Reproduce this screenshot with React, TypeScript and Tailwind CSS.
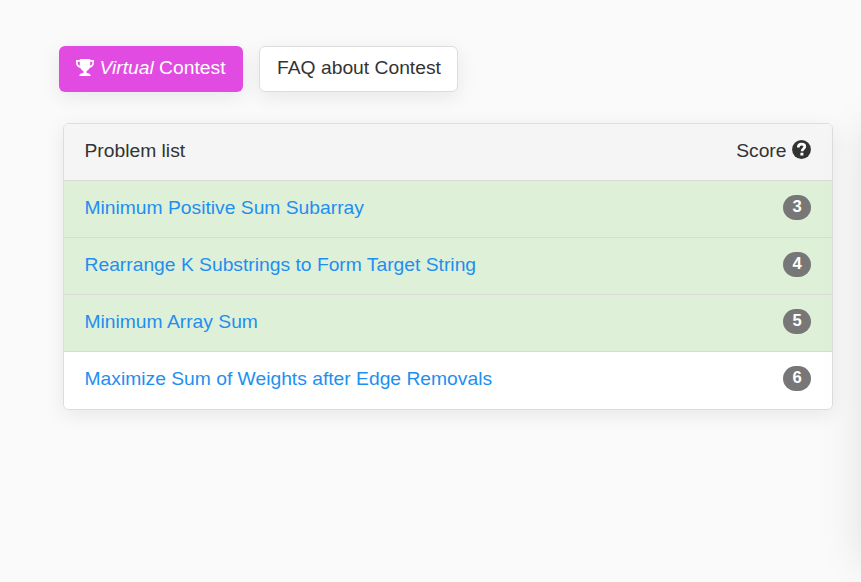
const PROBLEMS = [
  { title: 'Minimum Positive Sum Subarray', score: 3, solved: true },
  { title: 'Rearrange K Substrings to Form Target String', score: 4, solved: true },
  { title: 'Minimum Array Sum', score: 5, solved: true },
  { title: 'Maximize Sum of Weights after Edge Removals', score: 6, solved: false },
]

function TrophyIcon() {
  return (
    <svg viewBox="0 0 18 17" className="h-[17px] w-[18px] shrink-0" fill="currentColor">
      <path d="M3.800 0h10.400v1.100H18v2.400c0 2.600-1.400 5-4.400 5.500-.7 1.500-1.600 2.400-3 2.900v2.200c2 .1 3 .5 3.200 1.300h.7V17H3.500v-1.600h.7c.2-.8 1.200-1.200 3.200-1.300v-2.200c-1.400-.5-2.300-1.400-3-2.900C1.400 8.500 0 6.100 0 3.500V1.100h3.800zM1.700 2.700v.8c0 1.500.7 2.700 2.100 3.300V2.700zM14.200 2.700v4.100c1.400-.6 2.100-1.800 2.100-3.300v-.8z" fillRule="evenodd" />
    </svg>
  )
}

function QuestionIcon() {
  return (
    <svg viewBox="0 0 19 19" className="mb-[2px] h-[19px] w-[19px] shrink-0">
      <circle cx="9.5" cy="9.5" r="9.4" fill="#333" />
      <path d="M6.300 7.400c0-2.300 1.200-3.200 3.300-3.200 2 0 3.200.8 3.200 2.400 0 2.300-2.700 2.200-2.700 4.700" fill="none" stroke="#fff" strokeWidth="2.7" />
      <path d="M8.400 12.700h3v2.900h-3z" fill="#fff" />
    </svg>
  )
}

export default function App() {
  return (
    <div className="flex h-[582px] w-full overflow-hidden bg-[#fafafa] font-['Liberation_Sans',Arial,sans-serif] text-[19.28px] leading-[27px] text-[#333]">
      <main className="w-[861px] shrink-0 pt-[46px]">
        {/* Actions */}
        <div className="flex gap-4 pl-[59px]">
          <button className="flex h-[46px] w-[184px] items-center rounded-[6px] bg-[#e14be1] pb-[3px] pl-[17px] whitespace-pre text-white shadow-[0_5px_20px_rgba(0,0,0,0.08)]">
            <TrophyIcon />
            <span className="ml-[5.5px]"><i>Virtual</i> Contest</span>
          </button>
          <button className="flex h-[46px] w-[199px] items-center justify-center rounded-[6px] border border-[#ddd] bg-white pb-[3px] pl-px shadow-[0_5px_20px_rgba(0,0,0,0.08)]">
            FAQ about Contest
          </button>
        </div>

        {/* Problem list */}
        <section className="mt-[31px] ml-[63px] w-[770px] overflow-hidden rounded-[6px] border border-[#ddd] bg-white shadow-[0_5px_20px_rgba(0,0,0,0.08)]">
          <header className="flex h-[56px] items-center justify-between bg-[#f5f5f5] pr-[21px] pb-[3px] pl-[20.5px]">
            <span>Problem list</span>
            <span className="flex items-center gap-[5.5px]">
              Score
              <QuestionIcon />
            </span>
          </header>
          <ul>
            {PROBLEMS.map(problem => (
              <li
                key={problem.title}
                className={`flex h-[57px] items-center justify-between border-t border-[#d5ddd5] pr-[21px] pb-[3px] pl-[20.5px] last:h-[58px] last:pb-[4px] ${
                  problem.solved ? 'bg-[#def0d8]' : 'bg-white'
                }`}
              >
                <a href="#" className="text-[#1e8ff0]">{problem.title}</a>
                <span className="flex h-[25px] w-[28px] items-center justify-center rounded-[14px] bg-[#777] text-[16.6px] leading-none font-bold text-white">
                  {problem.score}
                </span>
              </li>
            ))}
          </ul>
        </section>
      </main>

      {/* Side panel, starts past the right edge */}
      <aside className="mt-[124px] h-[435px] w-[300px] shrink-0 bg-white shadow-[0_5px_40px_rgba(0,0,0,0.1)]" />
    </div>
  )
}
